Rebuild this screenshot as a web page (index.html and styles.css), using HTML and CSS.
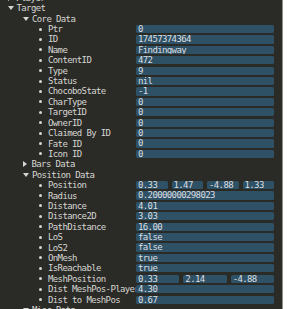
FILE: index.html
```html
<!DOCTYPE html>
<html lang="en">
<head>
  <meta charset="UTF-8" />
  <title>Target Inspector</title>
  <link rel="stylesheet" href="styles.css">
</head>
<body>
  <div class="panel">
    <div class="tree">
      <div class="row"><div class="label lv0"><span class="arrow closed"></span>Player</div></div>
      <div class="row"><div class="label lv0"><span class="arrow"></span>Target</div></div>
      <div class="row"><div class="label lv1"><span class="arrow"></span>Core Data</div></div>

      <div class="row"><div class="label lv2"><span class="dot"></span>Ptr</div><div class="vals"><span class="box">0</span></div></div>
      <div class="row"><div class="label lv2"><span class="dot"></span>ID</div><div class="vals"><span class="box">17457374364</span></div></div>
      <div class="row"><div class="label lv2"><span class="dot"></span>Name</div><div class="vals"><span class="box">Findingway</span></div></div>
      <div class="row"><div class="label lv2"><span class="dot"></span>ContentID</div><div class="vals"><span class="box">472</span></div></div>
      <div class="row"><div class="label lv2"><span class="dot"></span>Type</div><div class="vals"><span class="box">9</span></div></div>
      <div class="row"><div class="label lv2"><span class="dot"></span>Status</div><div class="vals"><span class="box">nil</span></div></div>
      <div class="row"><div class="label lv2"><span class="dot"></span>ChocoboState</div><div class="vals"><span class="box">-1</span></div></div>
      <div class="row"><div class="label lv2"><span class="dot"></span>CharType</div><div class="vals"><span class="box">0</span></div></div>
      <div class="row"><div class="label lv2"><span class="dot"></span>TargetID</div><div class="vals"><span class="box">0</span></div></div>
      <div class="row"><div class="label lv2"><span class="dot"></span>OwnerID</div><div class="vals"><span class="box">0</span></div></div>
      <div class="row"><div class="label lv2"><span class="dot"></span>Claimed By ID</div><div class="vals"><span class="box">0</span></div></div>
      <div class="row"><div class="label lv2"><span class="dot"></span>Fate ID</div><div class="vals"><span class="box">0</span></div></div>
      <div class="row"><div class="label lv2"><span class="dot"></span>Icon ID</div><div class="vals"><span class="box">0</span></div></div>

      <div class="row"><div class="label lv1"><span class="arrow closed"></span>Bars Data</div></div>
      <div class="row"><div class="label lv1"><span class="arrow"></span>Position Data</div></div>

      <div class="row"><div class="label lv2"><span class="dot"></span>Position</div><div class="vals"><span class="box">0.33</span><span class="box">1.47</span><span class="box">-4.88</span><span class="box">1.33</span></div></div>
      <div class="row"><div class="label lv2"><span class="dot"></span>Radius</div><div class="vals"><span class="box">0.20000000298023</span></div></div>
      <div class="row"><div class="label lv2"><span class="dot"></span>Distance</div><div class="vals"><span class="box">4.01</span></div></div>
      <div class="row"><div class="label lv2"><span class="dot"></span>Distance2D</div><div class="vals"><span class="box">3.03</span></div></div>
      <div class="row"><div class="label lv2"><span class="dot"></span>PathDistance</div><div class="vals"><span class="box">16.00</span></div></div>
      <div class="row"><div class="label lv2"><span class="dot"></span>LoS</div><div class="vals"><span class="box">false</span></div></div>
      <div class="row"><div class="label lv2"><span class="dot"></span>LoS2</div><div class="vals"><span class="box">false</span></div></div>
      <div class="row"><div class="label lv2"><span class="dot"></span>OnMesh</div><div class="vals"><span class="box">true</span></div></div>
      <div class="row"><div class="label lv2"><span class="dot"></span>IsReachable</div><div class="vals"><span class="box">true</span></div></div>
      <div class="row"><div class="label lv2"><span class="dot"></span>MeshPosition</div><div class="vals"><span class="box">0.33</span><span class="box">2.14</span><span class="box">-4.88</span></div></div>
      <div class="row"><div class="label lv2"><span class="dot"></span>Dist MeshPos-Player</div><div class="vals"><span class="box">4.30</span></div></div>
      <div class="row"><div class="label lv2"><span class="dot"></span>Dist to MeshPos</div><div class="vals"><span class="box">0.67</span></div></div>

      <div class="row"><div class="label lv1"><span class="arrow"></span>Misc Data</div></div>
    </div>
  </div>
</body>
</html>
```

FILE: styles.css
```css
body { margin: 0; background: #ffffff; }
.panel { width: 282px; height: 309px; background: #2a2a27; border-right: 1.5px solid #8c8c8a; overflow: hidden; font-family: "DejaVu Sans Mono", monospace; font-size: 9px; letter-spacing: -0.62px; color: #d6d6d2; }
.tree { margin-top: -7.4px; }
.row { display: grid; grid-template-columns: 136px 138px; height: 10.42px; align-items: center; }
.label { display: flex; align-items: center; white-space: nowrap; overflow: hidden; height: 10.42px; }
.lv0 { padding-left: 7.5px; }
.lv1 { padding-left: 23px; }
.lv2 { padding-left: 39px; }
.arrow { flex: none; width: 0; height: 0; margin-right: 3px; border-left: 3px solid transparent; border-right: 3px solid transparent; border-top: 4.5px solid #d6d6d2; }
.arrow.closed { border-top: 3px solid transparent; border-bottom: 3px solid transparent; border-left: 4.5px solid #d6d6d2; border-right: 0; margin-right: 4.5px; }
.dot { flex: none; width: 3px; height: 3px; border-radius: 50%; background: #d6d6d2; margin-right: 6px; }
.vals { display: flex; gap: 4px; }
.box { flex: 1; min-width: 0; height: 8.2px; line-height: 8.6px; padding-left: 2px; background: #2e5166; border-radius: 1.5px; color: #dcdfe0; overflow: hidden; white-space: nowrap; }
```
